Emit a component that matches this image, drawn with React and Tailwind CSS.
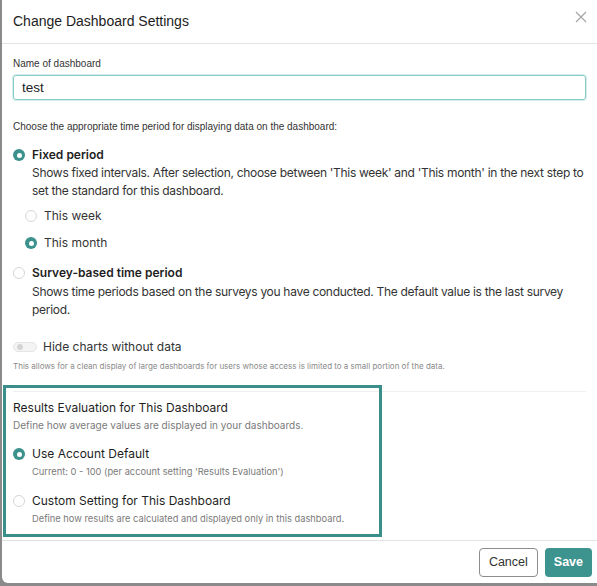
import { useState } from 'react'

function Radio({ checked }) {
  return checked ? (
    <span className="mt-[3px] flex h-[12px] w-[12px] shrink-0 items-center justify-center rounded-full bg-[#3b918c]">
      <span className="h-[5px] w-[5px] rounded-full bg-white" />
    </span>
  ) : (
    <span className="mt-[3px] h-[12px] w-[12px] shrink-0 rounded-full border border-[#d6d6d6] bg-white" />
  )
}

export default function App() {
  const [name, setName] = useState('test')

  return (
    <div className="h-[586px] w-[597px] overflow-hidden bg-[#8a8a8a] pl-[2px] pb-[3px] font-['Liberation_Sans',sans-serif] text-[#222]">
      <div className="relative flex h-full flex-col rounded-bl-[6px] bg-white">
        {/* Header */}
        <div className="flex h-[44px] shrink-0 items-center justify-between border-b border-[#e2e2e2] pl-[11px] pr-[10px]">
          <h2 className="text-[14px] text-[#1c1c1c]">Change Dashboard Settings</h2>
          <svg width="12" height="12" viewBox="0 0 12 12" className="mb-[10px] text-[#a5a5a5]">
            <path d="M1 1 L11 11 M11 1 L1 11" stroke="currentColor" strokeWidth="1.2" />
          </svg>
        </div>

        {/* Body */}
        <div className="flex-1 px-[11px] pt-[13px]">
          <label className="block text-[10px] leading-[14px] text-[#333]">Name of dashboard</label>
          <input
            value={name}
            onChange={e => setName(e.target.value)}
            className="mt-[4px] h-[25px] w-[573px] rounded-[3px] border border-[#86cbc6] px-[8px] text-[13.5px] text-[#222] outline-none shadow-[0_0_0_1px_#d5eeec]"
          />

          <p className="mt-[20px] text-[10px] leading-[14px] text-[#333]">
            Choose the appropriate time period for displaying data on the dashboard:
          </p>

          <div className="mt-[12px] flex gap-[7px] font-['Inter',sans-serif]">
            <Radio checked />
            <div>
              <div className="text-[12px] font-semibold leading-[17px] text-[#1e1e1e]">Fixed period</div>
              <div className="mt-[1px] text-[12px] leading-[17.5px] tracking-[-0.3px] text-[#333]">
                Shows fixed intervals. After selection, choose between 'This week' and 'This month' in the next step to set the standard for this dashboard.
              </div>
            </div>
          </div>

          <div className="mt-[8px] flex flex-col gap-[10px] pl-[12px] font-['Inter',sans-serif]">
            <div className="flex gap-[7px]">
              <Radio />
              <span className="text-[12px] leading-[17px] text-[#333]">This week</span>
            </div>
            <div className="flex gap-[7px]">
              <Radio checked />
              <span className="text-[12px] leading-[17px] text-[#333]">This month</span>
            </div>
          </div>

          <div className="mt-[13px] flex gap-[7px] font-['Inter',sans-serif]">
            <Radio />
            <div>
              <div className="text-[12px] font-semibold leading-[17px] text-[#1e1e1e]">Survey-based time period</div>
              <div className="mt-[2px] pr-[20px] text-[12px] leading-[18px] tracking-[-0.3px] text-[#333]">
                Shows time periods based on the surveys you have conducted. The default value is the last survey period.
              </div>
            </div>
          </div>

          <div className="mt-[19px] flex items-center gap-[6px] font-['Inter',sans-serif]">
            <span className="flex h-[10px] w-[24px] items-center rounded-full border border-[#e4e4e4] bg-[#f4f4f4] pl-[3px]">
              <span className="h-[6px] w-[6px] rounded-full bg-[#d4d4d4]" />
            </span>
            <span className="text-[12px] leading-[17px] text-[#333]">Hide charts without data</span>
          </div>
          <p className="mt-[5px] font-['Inter',sans-serif] text-[8px] leading-[12px] text-[#8a8a8a]">
            This allows for a clean display of large dashboards for users whose access is limited to a small portion of the data.
          </p>

          <div className="mt-[19px] border-t border-[#efefef] pt-[7px] font-['Inter',sans-serif]">
            <div className="text-[12px] leading-[17px] text-[#1e1e1e]">Results Evaluation for This Dashboard</div>
            <div className="mt-[2px] text-[10px] leading-[14px] text-[#7a7a7a]">
              Define how average values are displayed in your dashboards.
            </div>

            <div className="mt-[13px] flex gap-[7px]">
              <Radio checked />
              <div>
                <div className="text-[12px] leading-[17px] text-[#1e1e1e]">Use Account Default</div>
                <div className="mt-[3px] text-[9.3px] leading-[13px] text-[#7a7a7a]">
                  Current: 0 - 100 (per account setting 'Results Evaluation')
                </div>
              </div>
            </div>

            <div className="mt-[14px] flex gap-[7px]">
              <Radio />
              <div>
                <div className="text-[12px] leading-[17px] text-[#1e1e1e]">Custom Setting for This Dashboard</div>
                <div className="mt-[3px] text-[9.3px] leading-[13px] text-[#7a7a7a]">
                  Define how results are calculated and displayed only in this dashboard.
                </div>
              </div>
            </div>
          </div>
        </div>

        {/* Footer */}
        <div className="flex h-[43px] shrink-0 items-center justify-end gap-[7px] border-t border-[#e2e2e2] pr-[5px]">
          <button className="h-[29px] rounded-[4px] border border-[#8d8d8d] bg-white px-[9px] text-[12.5px] text-[#333]">
            Cancel
          </button>
          <button className="h-[29px] rounded-[4px] bg-[#3d948f] px-[9px] text-[12.5px] font-semibold text-white">
            Save
          </button>
        </div>

        {/* highlight annotation */}
        <div className="pointer-events-none absolute left-[1px] top-[385px] h-[152px] w-[379px] border-[3px] border-[#3b8f8a]" />
      </div>
    </div>
  )
}
